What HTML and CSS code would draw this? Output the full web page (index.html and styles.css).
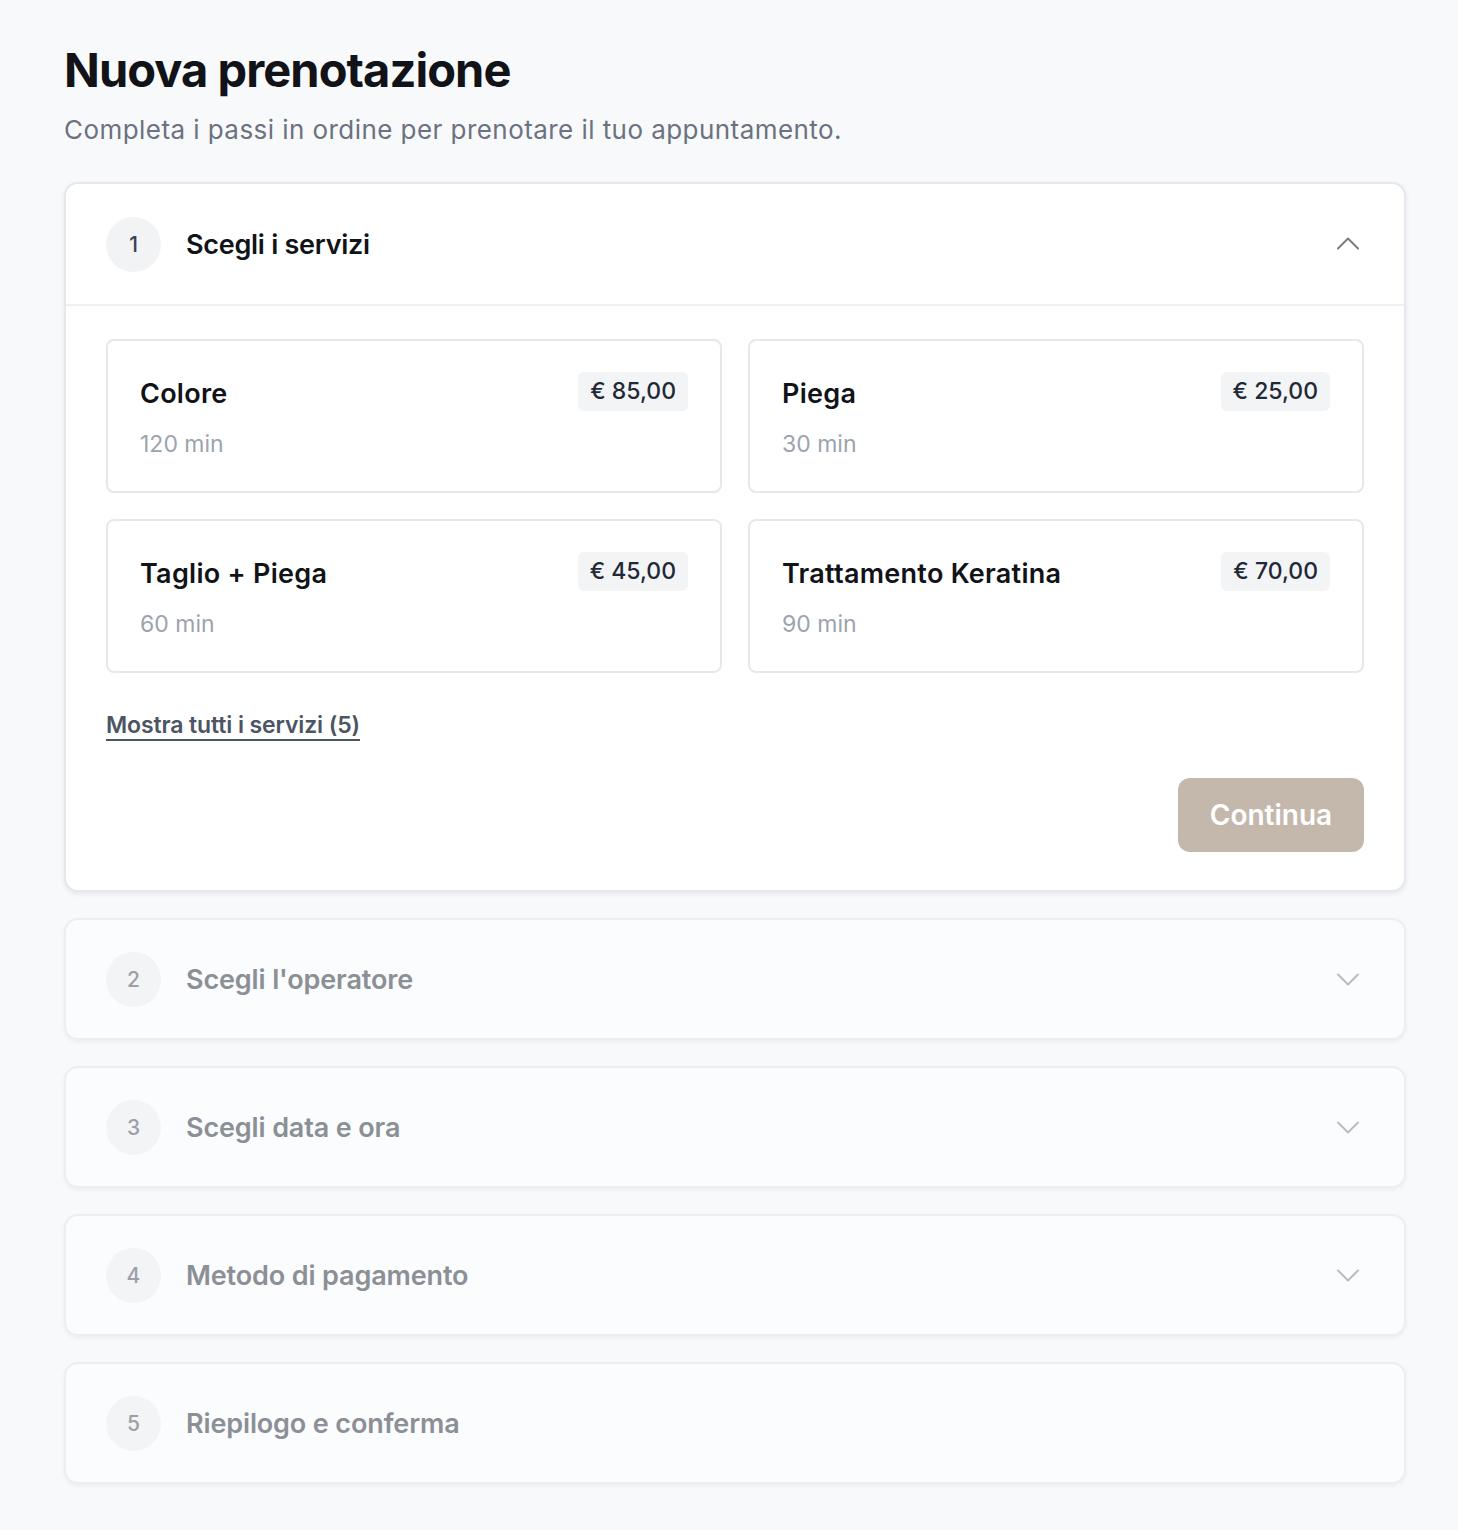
FILE: index.html
```html
<!DOCTYPE html>
<html lang="it">
<head>
  <meta charset="UTF-8" />
  <meta name="viewport" content="width=device-width, initial-scale=1.0"/>
  <title>Nuova prenotazione</title>
  <link rel="stylesheet" href="styles.css">
</head>
<body>
  <main class="page">
    <header class="page-head">
      <h1>Nuova prenotazione</h1>
      <p>Completa i passi in ordine per prenotare il tuo appuntamento.</p>
    </header>

    <section class="step open">
      <div class="step-head">
        <span class="step-num">1</span>
        <h2>Scegli i servizi</h2>
        <svg class="chev" width="24" height="24" viewBox="0 0 24 24"><path d="M2 16.5l10-10 10 10"/></svg>
      </div>
      <div class="step-body">
        <div class="services">
          <div class="service">
            <div class="service-top"><h3>Colore</h3><span class="price">€ 85,00</span></div>
            <div class="duration">120 min</div>
          </div>
          <div class="service">
            <div class="service-top"><h3>Piega</h3><span class="price">€ 25,00</span></div>
            <div class="duration">30 min</div>
          </div>
          <div class="service">
            <div class="service-top"><h3>Taglio + Piega</h3><span class="price">€ 45,00</span></div>
            <div class="duration">60 min</div>
          </div>
          <div class="service">
            <div class="service-top"><h3>Trattamento Keratina</h3><span class="price">€ 70,00</span></div>
            <div class="duration">90 min</div>
          </div>
        </div>
        <a class="show-all" href="#">Mostra tutti i servizi (5)</a>
        <div class="actions">
          <button class="btn-next" disabled>Continua</button>
        </div>
      </div>
    </section>

    <section class="step">
      <div class="step-head">
        <span class="step-num">2</span>
        <h2>Scegli l'operatore</h2>
        <svg class="chev" width="24" height="24" viewBox="0 0 24 24"><path d="M2 7.5l10 10 10-10"/></svg>
      </div>
    </section>

    <section class="step">
      <div class="step-head">
        <span class="step-num">3</span>
        <h2>Scegli data e ora</h2>
        <svg class="chev" width="24" height="24" viewBox="0 0 24 24"><path d="M2 7.5l10 10 10-10"/></svg>
      </div>
    </section>

    <section class="step">
      <div class="step-head">
        <span class="step-num">4</span>
        <h2>Metodo di pagamento</h2>
        <svg class="chev" width="24" height="24" viewBox="0 0 24 24"><path d="M2 7.5l10 10 10-10"/></svg>
      </div>
    </section>

    <section class="step">
      <div class="step-head">
        <span class="step-num">5</span>
        <h2>Riepilogo e conferma</h2>
      </div>
    </section>
  </main>
</body>
</html>
```

FILE: styles.css
```css
body {
  font-family: Inter, "Noto Sans", sans-serif;
  background: #f8f9fb;
  color: #111318;
  margin: 0;
}
.page {
  padding: 40px 52px 40px 64px;
}
.page-head h1 {
  font-size: 47px;
  font-weight: 700;
  letter-spacing: -0.02em;
  line-height: 60px;
  margin: 0;
}
.page-head p {
  font-size: 26px;
  color: #6b7280;
  letter-spacing: 0.017em;
  margin: 12px 0 34px;
  line-height: 36px;
}
.step {
  background: #fbfcfd;
  border: 2px solid #eceef1;
  border-radius: 14px;
  box-shadow: 0 2px 4px rgba(17, 24, 39, 0.05);
  margin-bottom: 26px;
}
.step.open {
  background: #fff;
  border-color: #e6e8eb;
  box-shadow: 0 2px 5px rgba(17, 24, 39, 0.08);
}
.step-head {
  display: flex;
  align-items: center;
  height: 118px;
  padding: 0 44px 0 40px;
}
.step.open .step-head {
  height: 120px;
  border-bottom: 2px solid #eef0f2;
}
.step-num {
  width: 55px;
  height: 55px;
  border-radius: 50%;
  background: #f1f3f5;
  display: flex;
  align-items: center;
  justify-content: center;
  font-size: 21px;
  font-weight: 500;
  color: #374151;
  margin-right: 25px;
}
.step-head h2 {
  flex: 1;
  margin: 0;
  font-size: 27px;
  font-weight: 600;
  letter-spacing: -0.01em;
  color: #111318;
}
.chev {
  fill: none;
  stroke: #777b82;
  stroke-width: 2;
  stroke-linecap: round;
  stroke-linejoin: round;
}
.step:not(.open) .step-num { background: #f3f4f5; color: #9ca0a6; }
.step:not(.open) h2 { color: #8b8f96; letter-spacing: -0.005em; }
.step:not(.open) .chev { stroke: #b8bcc2; }
.step-body {
  padding: 33px 40px 38px;
}
.services {
  display: grid;
  grid-template-columns: 1fr 1fr;
  gap: 26px 26px;
}
.service {
  border: 2px solid #e6e8eb;
  border-radius: 8px;
  height: 154px;
  box-sizing: border-box;
  padding: 31px 32px 0 32px;
}
.service-top {
  display: flex;
  justify-content: space-between;
  align-items: flex-start;
}
.service h3 {
  margin: 5px 0 0;
  font-size: 27px;
  font-weight: 600;
  letter-spacing: 0.01em;
}
.price {
  background: #f3f4f6;
  border-radius: 6px;
  padding: 0 12px;
  height: 39px;
  line-height: 39px;
  font-size: 23px;
  font-weight: 500;
  letter-spacing: 0;
  color: #1f2937;
}
.duration {
  margin-top: 19px;
  font-size: 23px;
  color: #9ca3af;
}
.show-all {
  display: inline-block;
  margin-top: 38px;
  font-size: 23px;
  font-weight: 600;
  letter-spacing: -0.005em;
  color: #4b5563;
  text-decoration-thickness: 2px;
  text-underline-offset: 6px;
}
.actions {
  display: flex;
  justify-content: flex-end;
  margin-top: 39px;
}
.btn-next {
  background: #c4b8ad;
  color: #fff;
  border: none;
  border-radius: 12px;
  width: 186px;
  height: 74px;
  font-family: inherit;
  font-size: 28px;
  font-weight: 600;
  letter-spacing: 0;
}
```
